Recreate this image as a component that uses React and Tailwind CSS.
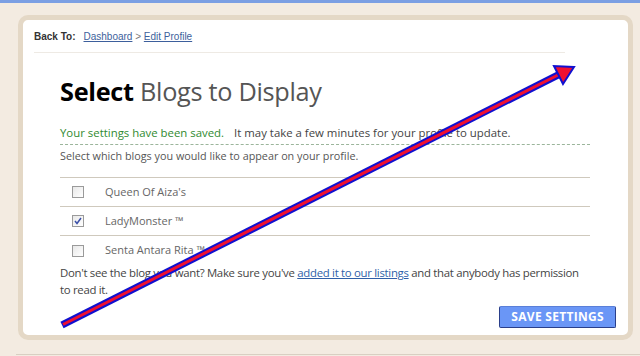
import React from 'react';

const blogs = [
    { name: 'Queen Of Aiza\'s', checked: false },
    { name: 'LadyMonster ™', checked: true },
    { name: 'Senta Antara Rita ™', checked: false },
];

const Checkbox = ({ checked }) => (
    <span className="w-[12px] h-[12px] border border-[#9a9a9a] bg-gradient-to-br from-[#e8e8e8] to-white flex items-center justify-center">
        {checked && (
            <svg width="8" height="8" viewBox="0 0 8 8">
                <path d="M1 4 L3 6.5 L7 1" fill="none" stroke="#3a4fa8" strokeWidth="1.5" />
            </svg>
        )}
    </span>
);

const App = () => {
    return (
        <div className="relative w-[640px] h-[356px] overflow-hidden bg-[#f3ebe1] border-t-[3px] border-[#7b9fe3] font-['Open_Sans',sans-serif]">
            <div className="ml-[18px] mt-[12px] w-[615px] h-[325px] border-[5px] border-[#e4d8c6] rounded-[10px] bg-white">
                <div className="pl-[11px] pt-[9px] pr-[63px]">
                    <div className="flex items-center gap-[8px] text-[10px] pb-[8px] border-b border-[#eeeae4] font-['Liberation_Sans',sans-serif]">
                        <span className="font-bold text-[#333]">Back To:</span>
                        <span className="text-[#7a7a7a]">
                            <a className="text-[#3d5f9c] underline">Dashboard</a>
                            {' > '}
                            <a className="text-[#3d5f9c] underline">Edit Profile</a>
                        </span>
                    </div>
                </div>
                <div className="pl-[37px] pr-[38px]">
                    <h1 className="mt-[22px] text-[25.3px] leading-[32px] text-[#555] tracking-[-0.3px]">
                        <span className="font-bold text-black">Select</span> Blogs to Display
                    </h1>
                    <div className="mt-[18px] text-[11.4px] leading-[16px] pb-[3px] border-b border-dashed border-[#9bb59b]">
                        <span className="text-[#2f8a2f]">Your settings have been saved.</span>
                        <span className="text-[#444] ml-[10px]">It may take a few minutes for your profile to update.</span>
                    </div>
                    <p className="mt-[4px] text-[10.8px] leading-[14px] text-[#555]">
                        Select which blogs you would like to appear on your profile.
                    </p>
                    <div className="mt-[14px] border-t border-[#cfc9bd]">
                        {blogs.map((b, i) => (
                            <div
                                key={b.name}
                                className={`flex items-center h-[29px] ${i < blogs.length - 1 ? 'border-b border-[#cfc9bd]' : ''}`}
                            >
                                <span className="ml-[12px]"><Checkbox checked={b.checked} /></span>
                                <span className="ml-[21px] text-[11px] text-[#666]">{b.name}</span>
                            </div>
                        ))}
                    </div>
                    <p className="-mt-[1px] text-[11.4px] leading-[17px] text-[#444] tracking-[-0.3px]">
                        Don't see the blog you want? Make sure you've{' '}
                        <a className="text-[#2f5fa8] underline">added it to our listings</a>{' '}
                        and that anybody has permission to read it.
                    </p>
                    <div className="flex justify-end mt-[8px] -mr-[26px]">
                        <button className="px-[11px] h-[22px] bg-[#6a96f6] border border-[#2a3f8a] border-t-[#5a7fd8] rounded-[2px] text-white text-[12px] font-bold tracking-[0.3px]">
                            SAVE SETTINGS
                        </button>
                    </div>
                </div>
            </div>
            <div className="ml-[16px] mt-[14px] border-t border-[#d8cfc2]" />
            <svg className="absolute left-0 top-0" width="640" height="356" viewBox="0 0 640 356">
                <line x1="62" y1="322" x2="560" y2="71" stroke="#1010d0" strokeWidth="7" />
                <line x1="63" y1="321.5" x2="560" y2="71" stroke="#f01030" strokeWidth="3" />
                <polygon points="574,64 554,63 563,81" fill="#f01030" stroke="#1010d0" strokeWidth="2" strokeLinejoin="miter" />
            </svg>
        </div>
    );
};

export default App;
